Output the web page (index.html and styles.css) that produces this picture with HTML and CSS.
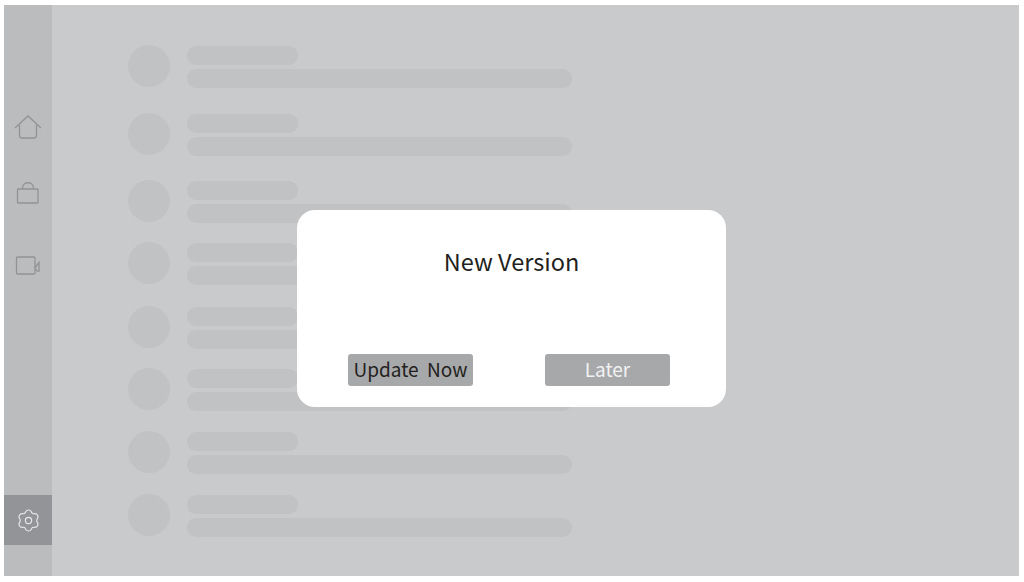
FILE: index.html
```html
<!DOCTYPE html>
<html lang="en">
<head>
    <meta charset="UTF-8">
    <meta name="viewport" content="width=device-width, initial-scale=1.0">
    <title>New Version</title>
    <link rel="stylesheet" href="styles.css">
</head>
<body>
    <div class="screen">
        <div class="sidebar">
            <svg class="icon icon-home" viewBox="0 0 28 28" fill="none">
                <path d="M1 15 14 3 27 15"/>
                <path d="M5.500 12V22.500Q5.500 25 8 25H20Q22.500 25 22.500 22.500V12"/>
            </svg>
            <svg class="icon icon-bag" viewBox="0 0 28 28" fill="none">
                <rect x="3.500" y="10" width="20.500" height="14" rx="0.500"/>
                <path d="M8.500 10V9C8.500 2 19.500 2 19.500 9V10"/>
            </svg>
            <svg class="icon icon-video" viewBox="0 0 28 28" fill="none">
                <rect x="2.500" y="6" width="18.500" height="17" rx="1"/>
                <path d="M21 17 23.500 13.500 25 11.500V20H23.500L21 18"/>
            </svg>
            <div class="sidebar-active">
                <svg class="icon icon-gear" viewBox="0 0 28 28" fill="none">
                    <path d="M10.930 3.960A3.600 3.600 0 0 1 17.070 3.960A3.200 3.200 0 0 0 21.160 6.320A3.600 3.600 0 0 1 24.230 11.640A3.200 3.200 0 0 0 24.230 16.360A3.600 3.600 0 0 1 21.160 21.680A3.200 3.200 0 0 0 17.070 24.040A3.600 3.600 0 0 1 10.930 24.040A3.200 3.200 0 0 0 6.840 21.680A3.600 3.600 0 0 1 3.770 16.360A3.200 3.200 0 0 0 3.770 11.640A3.600 3.600 0 0 1 6.840 6.320A3.200 3.200 0 0 0 10.930 3.960Z"/>
                    <circle cx="14" cy="14" r="3.500"/>
                </svg>
            </div>
        </div>

        <div class="list">
            <div class="row"><div class="avatar"></div><div class="lines"><div class="line-short"></div><div class="line-long"></div></div></div>
            <div class="row"><div class="avatar"></div><div class="lines"><div class="line-short"></div><div class="line-long"></div></div></div>
            <div class="row"><div class="avatar"></div><div class="lines"><div class="line-short"></div><div class="line-long"></div></div></div>
            <div class="row"><div class="avatar"></div><div class="lines"><div class="line-short"></div><div class="line-long"></div></div></div>
            <div class="row"><div class="avatar"></div><div class="lines"><div class="line-short"></div><div class="line-long"></div></div></div>
            <div class="row"><div class="avatar"></div><div class="lines"><div class="line-short"></div><div class="line-long"></div></div></div>
            <div class="row"><div class="avatar"></div><div class="lines"><div class="line-short"></div><div class="line-long"></div></div></div>
            <div class="row"><div class="avatar"></div><div class="lines"><div class="line-short"></div><div class="line-long"></div></div></div>
        </div>

        <div class="dialog">
            <h2>New Version</h2>
            <div class="buttons">
                <button class="btn">Update&nbsp; Now</button>
                <button class="btn btn-later">Later</button>
            </div>
        </div>
    </div>
</body>
</html>
```

FILE: styles.css
```css
body {
    font-family: "Noto Sans CJK JP", "Noto Sans", sans-serif;
    background-color: #fff;
    margin: 0;
}
.screen {
    position: relative;
    display: flex;
    width: 1015px;
    height: 571px;
    margin: 5px 0 0 4px;
    background: #c9cacc;
}
.sidebar {
    display: flex;
    flex-direction: column;
    align-items: center;
    width: 48px;
    background: #bbbcbe;
}
.icon {
    display: block;
    width: 28px;
    height: 28px;
    stroke: #929395;
    stroke-width: 1.3;
}
.icon-home {
    margin-top: 108px;
}
.icon-bag {
    margin-top: 38px;
}
.icon-video {
    margin-top: 44px;
}
.sidebar-active {
    display: flex;
    align-items: center;
    justify-content: center;
    width: 48px;
    height: 50px;
    margin-top: 216px;
    background: #939497;
}
.sidebar-active .icon {
    stroke: #e9e9ea;
}
.icon-gear {
    width: 25px;
    height: 25px;
}
.list {
    display: grid;
    grid-template-rows: 68px 67px 62px 64px 62px 63px 63px 63px;
    padding: 41px 0 0 76px;
}
.row {
    display: flex;
    gap: 17px;
}
.avatar {
    width: 42px;
    height: 42px;
    margin-top: -1px;
    border-radius: 50%;
    background: #c1c2c4;
}
.lines {
    display: flex;
    flex-direction: column;
    gap: 4px;
}
.line-short, .line-long {
    height: 19px;
    border-radius: 9px;
    background: #c1c2c4;
}
.line-short {
    width: 111px;
}
.line-long {
    width: 385px;
}
.dialog {
    position: absolute;
    left: 293px;
    top: 205px;
    box-sizing: border-box;
    width: 429px;
    height: 197px;
    padding: 32px 51px 0;
    border-radius: 18px;
    background: #fff;
}
h2 {
    margin: 0;
    font-size: 23.5px;
    font-weight: 400;
    line-height: 38px;
    text-align: center;
    color: #231f20;
}
.buttons {
    display: flex;
    justify-content: space-between;
    margin-top: 74px;
    padding-right: 5px;
}
.btn {
    width: 125px;
    height: 32px;
    padding: 0 0 4px;
    border: none;
    border-radius: 3px;
    font-family: inherit;
    font-size: 19px;
    color: #231f20;
    background: #a7a8aa;
}
.btn-later {
    color: #f1f1f2;
}
```
